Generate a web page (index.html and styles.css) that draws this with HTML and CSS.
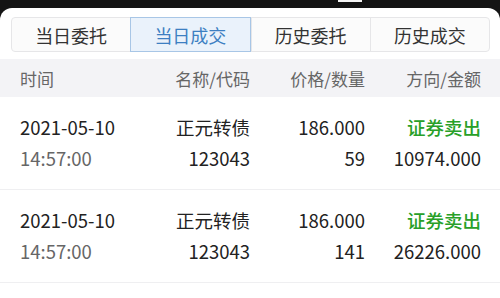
FILE: index.html
```html
<!DOCTYPE html>
<html lang="zh-CN">
<head>
    <meta charset="UTF-8">
    <meta name="viewport" content="width=device-width, initial-scale=1.0">
    <title>当日成交</title>
    <link rel="stylesheet" href="styles.css">
</head>
<body>
    <div class="notch"></div>
    <div class="screen">
        <div class="tabs">
            <div class="tab">当日委托</div>
            <div class="tab active">当日成交</div>
            <div class="tab">历史委托</div>
            <div class="tab">历史成交</div>
        </div>

        <div class="list-head">
            <div class="col-left">时间</div>
            <div>名称/代码</div>
            <div>价格/数量</div>
            <div>方向/金额</div>
        </div>

        <div class="deal">
            <div class="col-left">2021-05-10</div>
            <div>正元转债</div>
            <div>186.000</div>
            <div class="sell">证券卖出</div>
            <div class="col-left sub">14:57:00</div>
            <div>123043</div>
            <div>59</div>
            <div>10974.000</div>
        </div>

        <div class="deal">
            <div class="col-left">2021-05-10</div>
            <div>正元转债</div>
            <div>186.000</div>
            <div class="sell">证券卖出</div>
            <div class="col-left sub">14:57:00</div>
            <div>123043</div>
            <div>141</div>
            <div>26226.000</div>
        </div>
    </div>
</body>
</html>
```

FILE: styles.css
```css
body, html {
    margin: 0;
    padding: 0;
    height: 100%;
    overflow: hidden;
    background-color: #141414;
    font-family: 'Noto Sans CJK SC', 'Noto Sans', sans-serif;
}
.notch {
    position: absolute;
    top: 0;
    left: 338px;
    width: 24px;
    height: 2px;
    background-color: #f4f4f4;
}
.screen {
    margin-top: 8px;
    height: 290px;
    background-color: #fff;
    border-radius: 12px 12px 0 0;
    overflow: hidden;
}
.tabs {
    display: flex;
    margin: 9px 10px 0 11px;
    height: 35px;
    border: 1px solid #e6e6e8;
    border-radius: 4px;
    background-color: #fbfbfb;
    box-sizing: border-box;
}
.tab {
    flex: 1;
    display: flex;
    align-items: center;
    justify-content: center;
    font-size: 18px;
    color: #333;
    border-left: 1px solid #e6e6e8;
}
.tab:first-child {
    border-left: none;
}
.tab.active {
    background-color: #eaf2fb;
    color: #3d7fc2;
    border: 1px solid #a8c6e6;
    margin: -1px 0;
}
.list-head, .deal {
    display: grid;
    grid-template-columns: 1fr 110px 115px 116px;
    padding: 0 19px 0 20px;
    text-align: right;
}
.list-head {
    margin-top: 7px;
    height: 38px;
    align-items: center;
    background-color: #f3f3f6;
    font-size: 17px;
    color: #666;
}
.deal {
    padding-top: 15px;
    padding-bottom: 15px;
    line-height: 31px;
    font-size: 18.5px;
    color: #222;
    border-bottom: 1px solid #efeff1;
}
.col-left {
    text-align: left;
}
.sub {
    color: #666;
}
.sell {
    color: #28a028;
    font-weight: 500;
}
```
